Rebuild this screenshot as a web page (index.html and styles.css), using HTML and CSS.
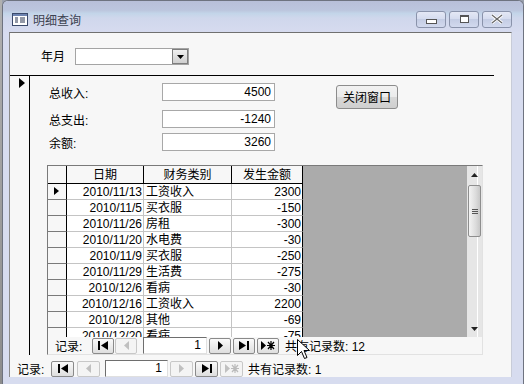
FILE: index.html
```html
<!DOCTYPE html>
<html lang="zh-CN">
<head>
    <meta charset="UTF-8">
    <title>明细查询</title>
    <link rel="stylesheet" href="styles.css">
</head>
<body>
    <div class="escritorio"></div>
    <div class="ventana">
        <div class="titulo">
            <svg class="icono" width="16" height="13" viewBox="0 0 16 13">
                <rect x="0.5" y="0.5" width="15" height="12" fill="#fff" stroke="#3b4a6b"/>
                <rect x="1" y="1" width="14" height="2" fill="#6d83b0"/>
                <path d="M3 5h3M3 7h3M3 9h3M8 5h5M8 7h5M8 9h5" stroke="#26324e" stroke-width="1"/>
            </svg>
            <span class="titulo-texto">明细查询</span>
            <div class="controles">
                <div class="control"><span class="min"></span></div>
                <div class="control"><span class="max"></span></div>
                <div class="control">
                    <svg width="14" height="10" viewBox="0 0 14 10"><path d="M2 1l10 8M12 1L2 9" stroke="#fff" stroke-width="3"/><path d="M2 1l10 8M12 1L2 9" stroke="#666" stroke-width="1.2"/></svg>
                </div>
            </div>
        </div>

        <div class="cliente">
            <div class="cabecera">
                <span class="etiqueta-mes">年月</span>
                <div class="combo">
                    <div class="combo-flecha"><svg width="7" height="4" viewBox="0 0 7 4"><path d="M0 0h7L3.5 4z" fill="#000"/></svg></div>
                </div>
            </div>

            <div class="detalle">
                <div class="selector"><span class="flecha"></span></div>
                <div class="cuerpo">
                    <div class="fila-superior">
                        <div class="campos">
                            <div class="campo c1"><span class="etiqueta">总收入:</span><span class="caja">4500</span></div>
                            <div class="campo c2"><span class="etiqueta">总支出:</span><span class="caja">-1240</span></div>
                            <div class="campo c3"><span class="etiqueta">余额:</span><span class="caja">3260</span></div>
                        </div>
                        <button class="cerrar">关闭窗口</button>
                    </div>

                    <div class="subform">
                        <div class="hoja">
                            <div class="tabla-zona">
                                <div class="tabla">
                                    <div class="fila encabezado">
                                        <div class="sel"></div>
                                        <div class="col fecha">日期</div>
                                        <div class="col tipo">财务类别</div>
                                        <div class="col monto">发生金额</div>
                                    </div>
                                    <div class="fila"><div class="sel"><span class="flecha"></span></div><div class="col fecha">2010/11/13</div><div class="col tipo">工资收入</div><div class="col monto">2300</div></div>
                                    <div class="fila"><div class="sel"></div><div class="col fecha">2010/11/5</div><div class="col tipo">买衣服</div><div class="col monto">-150</div></div>
                                    <div class="fila"><div class="sel"></div><div class="col fecha">2010/11/26</div><div class="col tipo">房租</div><div class="col monto">-300</div></div>
                                    <div class="fila"><div class="sel"></div><div class="col fecha">2010/11/20</div><div class="col tipo">水电费</div><div class="col monto">-30</div></div>
                                    <div class="fila"><div class="sel"></div><div class="col fecha">2010/11/9</div><div class="col tipo">买衣服</div><div class="col monto">-250</div></div>
                                    <div class="fila"><div class="sel"></div><div class="col fecha">2010/11/29</div><div class="col tipo">生活费</div><div class="col monto">-275</div></div>
                                    <div class="fila"><div class="sel"></div><div class="col fecha">2010/12/6</div><div class="col tipo">看病</div><div class="col monto">-30</div></div>
                                    <div class="fila"><div class="sel"></div><div class="col fecha">2010/12/16</div><div class="col tipo">工资收入</div><div class="col monto">2200</div></div>
                                    <div class="fila"><div class="sel"></div><div class="col fecha">2010/12/8</div><div class="col tipo">其他</div><div class="col monto">-69</div></div>
                                    <div class="fila"><div class="sel"></div><div class="col fecha">2010/12/20</div><div class="col tipo">看病</div><div class="col monto">-75</div></div>
                                </div>
                            </div>
                            <div class="barra">
                                <svg class="barra-arriba" width="7" height="4" viewBox="0 0 7 4"><path d="M0 4h7L3.5 0z" fill="#222"/></svg>
                                <div class="pulgar"><span></span><span></span><span></span></div>
                                <svg class="barra-abajo" width="7" height="4" viewBox="0 0 7 4"><path d="M0 0h7L3.5 4z" fill="#222"/></svg>
                            </div>
                        </div>
                        <div class="navegacion nav-sub">
                            <span class="nav-etiqueta">记录:</span>
                            <span class="boton primero"><svg width="10" height="9" viewBox="0 0 10 9"><rect width="2" height="9"/><path d="M10 0v9L3 4.5z"/></svg></span>
                            <span class="boton anterior apagado"><svg width="5" height="9" viewBox="0 0 5 9"><path d="M5 0v9L0 4.5z"/></svg></span>
                            <span class="numero">1</span>
                            <span class="boton"><svg width="5" height="9" viewBox="0 0 5 9"><path d="M0 0v9l5-4.5z"/></svg></span>
                            <span class="boton"><svg width="10" height="9" viewBox="0 0 10 9"><path d="M0 0v9l7-4.5z"/><rect x="8" width="2" height="9"/></svg></span>
                            <span class="boton"><svg width="14" height="9" viewBox="0 0 14 9"><path d="M0 0v9l5-4.5z"/><path d="M10 0v9M6 4.5h8M7 1l6 7M13 1L7 8" stroke="#000" stroke-width="1.2"/></svg></span>
                            <span class="total">共有记录数: 12</span>
                        </div>
                    </div>
                </div>
            </div>

            <div class="navegacion nav-principal">
                <span class="nav-etiqueta">记录:</span>
                <span class="boton primero"><svg width="10" height="9" viewBox="0 0 10 9"><rect width="2" height="9"/><path d="M10 0v9L3 4.5z"/></svg></span>
                <span class="boton anterior apagado"><svg width="5" height="9" viewBox="0 0 5 9"><path d="M5 0v9L0 4.5z"/></svg></span>
                <span class="numero">1</span>
                <span class="boton apagado"><svg width="5" height="9" viewBox="0 0 5 9"><path d="M0 0v9l5-4.5z"/></svg></span>
                <span class="boton"><svg width="10" height="9" viewBox="0 0 10 9"><path d="M0 0v9l7-4.5z"/><rect x="8" width="2" height="9"/></svg></span>
                <span class="boton apagado"><svg width="14" height="9" viewBox="0 0 14 9"><path d="M0 0v9l5-4.5z"/><path d="M10 0v9M6 4.5h8M7 1l6 7M13 1L7 8" stroke="#bbb" stroke-width="1.2"/></svg></span>
                <span class="total">共有记录数: 1</span>
            </div>
        </div>
    </div>

    <!-- puntero del raton -->
    <svg class="puntero" width="14" height="22" viewBox="0 0 14 22">
        <path d="M0.5 0.5v16l4-4 3 7 2.5-1-3-7h5.5z" fill="#fff" stroke="#000"/>
    </svg>
</body>
</html>
```

FILE: styles.css
```css
/* -------------------------ventana------------------------ */
body {
    margin: 0;
    width: 524px;
    height: 384px;
    overflow: hidden;
    position: relative;
    display: flex;
    background-color: #9aa0ad;
    font-family: "Liberation Sans", "Noto Sans CJK SC", sans-serif;
    font-size: 12px;
    color: #000;
}

.escritorio {
    width: 2px;
    background: linear-gradient(#b0b0b0, #8c8c8c);
}

.ventana {
    width: 522px;
    height: 384px;
    box-sizing: border-box;
    border: 1px solid #6e7380;
    border-bottom: none;
    border-radius: 6px 6px 0 0;
    background-color: #d7dcef;
    display: flex;
    flex-direction: column;
}

.titulo {
    height: 31px;
    flex: none;
    display: flex;
    align-items: center;
    border-radius: 5px 5px 0 0;
    background: linear-gradient(#b8bfd9 0%, #bcc6de 30%, #c3d5e9 40%, #cfd7ec 55%, #d6dbef 100%);
}

.icono {
    margin-left: 9px;
    margin-top: 5px;
}

.titulo-texto {
    margin-left: 5px;
    margin-top: 6px;
    color: #3c4250;
    font-size: 12px;
}

.controles {
    margin-left: auto;
    margin-right: 11px;
    margin-top: 5px;
    display: flex;
    gap: 3px;
}

.control {
    width: 28px;
    height: 15px;
    border: 1px solid #8a93ab;
    border-radius: 3px;
    background: linear-gradient(#e4e8f5 0%, #d5dcef 45%, #c4cde4 50%, #d2d9ee 100%);
    display: flex;
    align-items: center;
    justify-content: center;
}

.min {
    width: 9px;
    height: 3px;
    margin-top: 5px;
    border: 1px solid #555;
    background-color: #fff;
}

.max {
    width: 7px;
    height: 5px;
    border: 1px solid #555;
    border-top-width: 2px;
    background-color: #fff;
}

/* -------------------------area cliente------------------------ */
.cliente {
    margin-left: 6px;
    width: 503px;
    height: 345px;
    box-sizing: border-box;
    border-top: 1px solid #707070;
    border-left: 1px solid #8a8a8a;
    border-right: 1px solid #c8ccd8;
    background-color: #f7f7f7;
    display: flex;
    flex-direction: column;
}

.cabecera {
    width: 484px;
    height: 42px;
    flex: none;
    border-bottom: 1px solid #000;
    display: flex;
    align-items: flex-start;
}

.etiqueta-mes {
    margin-left: 31px;
    margin-top: 16px;
    line-height: 16px;
}

.combo {
    margin-left: 10px;
    margin-top: 15px;
    width: 114px;
    height: 17px;
    box-sizing: border-box;
    border: 1px solid #a4a4a4;
    background-color: #fff;
    display: flex;
    justify-content: flex-end;
}

.combo-flecha {
    width: 16px;
    height: 15px;
    box-sizing: border-box;
    border: 1px solid #7e7e7e;
    background: linear-gradient(#f0f0f0, #cfcfcf);
    display: flex;
    align-items: center;
    justify-content: center;
}

.detalle {
    height: 280px;
    flex: none;
    display: flex;
}

.selector {
    width: 19px;
    height: 279px;
    border-right: 1px solid #000;
    flex: none;
}

.flecha {
    display: block;
    width: 0;
    height: 0;
    border-top: 5px solid transparent;
    border-bottom: 5px solid transparent;
    border-left: 6px solid #000;
}

.selector .flecha {
    margin: 2px 0 0 9px;
}

.cuerpo {
    flex: 1;
    display: flex;
    flex-direction: column;
}

.fila-superior {
    display: flex;
    align-items: flex-start;
}

.campos {
    padding-top: 7px;
    display: flex;
    flex-direction: column;
}

.campo {
    display: flex;
    align-items: center;
}

.c2 {
    margin-top: 9px;
}

.c3 {
    margin-top: 5px;
}

.etiqueta {
    width: 113px;
    padding-left: 19px;
}

.caja {
    width: 113px;
    height: 18px;
    box-sizing: border-box;
    border: 1px solid #a8a8a8;
    background-color: #fff;
    text-align: right;
    padding-right: 3px;
    line-height: 16px;
}

.cerrar {
    margin-left: 61px;
    margin-top: 9px;
    width: 62px;
    height: 24px;
    padding: 0 0 2px 0;
    border: 1px solid #8c8c8c;
    border-radius: 3px;
    background: linear-gradient(#f2f2f2 0%, #ebebeb 48%, #d8d8d8 52%, #cfcfcf 100%);
    font-family: inherit;
    font-size: 12px;
    color: #000;
}

/* -------------------------subformulario------------------------ */
.subform {
    margin-left: 17px;
    margin-top: 14px;
    width: 436px;
    height: 190px;
    box-sizing: border-box;
    border-top: 1px solid #7a7a7a;
    border-left: 1px solid #7a7a7a;
    border-right: 1px solid #e2e2e2;
    border-bottom: 1px solid #e2e2e2;
    display: flex;
    flex-direction: column;
}

.hoja {
    height: 171px;
    display: flex;
    flex: none;
}

.tabla-zona {
    width: 420px;
    background-color: #ababab;
    overflow: hidden;
}

.tabla {
    width: 255px;
}

.fila {
    display: flex;
    height: 16px;
    line-height: 15px;
    background-color: #fff;
}

.fila .sel,
.fila .col {
    box-sizing: border-box;
    height: 16px;
    padding-top: 1px;
    border-bottom: 1px solid #c4c4c4;
    border-right: 1px solid #c4c4c4;
    white-space: nowrap;
    overflow: hidden;
}

.fila .sel {
    width: 19px;
    padding-top: 0;
    background-color: #f7f7f7;
    border-right: 1px solid #000;
    border-bottom: 1px solid #7a7a7a;
}

.fila .sel .flecha {
    margin: 3px 0 0 6px;
    border-top-width: 4px;
    border-bottom-width: 4px;
    border-left-width: 5px;
}

.fecha {
    width: 77px;
    text-align: right;
    padding-right: 1px;
}

.tipo {
    width: 88px;
    padding-left: 2px;
}

.fila .monto {
    width: 71px;
    text-align: right;
    padding-right: 1px;
    border-right: 1px solid #000;
}

.encabezado {
    height: 18px;
    line-height: 17px;
    background-color: #f7f7f7;
}

.encabezado .sel,
.encabezado .col {
    height: 18px;
    border-bottom: 1px solid #000;
    border-right: 1px solid #000;
    text-align: center;
    padding: 1px 0 0 0;
}

.barra {
    width: 15px;
    background: linear-gradient(90deg, #e6e6e6 0, #e6e6e6 10px, #fff 10px, #fff 11px, #e6e6e6 11px);
    display: flex;
    flex-direction: column;
    align-items: center;
}

.barra-arriba {
    margin-top: 7px;
}

.pulgar {
    margin-top: 8px;
    width: 13px;
    height: 52px;
    box-sizing: border-box;
    border: 1px solid #8e8e8e;
    border-radius: 2px;
    background: linear-gradient(90deg, #f3f3f3, #dcdcdc 60%, #c8c8c8);
    display: flex;
    flex-direction: column;
    justify-content: center;
    align-items: center;
    gap: 1px;
}

.pulgar span {
    width: 6px;
    height: 1px;
    background-color: #555;
}

.barra-abajo {
    margin-top: auto;
    margin-bottom: 6px;
}

/* -------------------------navegacion------------------------ */
.navegacion {
    display: flex;
    align-items: center;
    white-space: nowrap;
}

.boton {
    width: 22px;
    height: 16px;
    box-sizing: border-box;
    border: 1px solid #8a8a8a;
    border-radius: 2px;
    background: linear-gradient(#fafafa, #dedede);
    display: flex;
    align-items: center;
    justify-content: center;
    margin-left: 2px;
}

.boton svg {
    fill: #000;
}

.apagado {
    border-color: #c8c8c8;
    background: #f4f4f4;
}

.apagado svg {
    fill: #c0c0c0;
}

.numero {
    height: 17px;
    box-sizing: border-box;
    border-top: 1px solid #6e6e6e;
    border-left: 1px solid #6e6e6e;
    border-right: 1px solid #e0e0e0;
    border-bottom: 1px solid #e0e0e0;
    background-color: #fff;
    text-align: right;
    padding-right: 5px;
    line-height: 15px;
    margin-left: 6px;
    margin-right: 0;
}

.total {
    margin-left: 6px;
}

.nav-sub {
    height: 17px;
    padding-left: 7px;
    background-color: #f7f7f7;
}

.nav-sub .nav-etiqueta {
    width: 35px;
}

.nav-sub .anterior {
    margin-left: 1px;
}

.nav-sub .numero {
    width: 64px;
}

.nav-principal {
    height: 20px;
    padding-left: 7px;
    padding-top: 4px;
}

.nav-principal .nav-etiqueta {
    width: 32px;
}

.nav-principal .boton {
    width: 23px;
    margin-left: 2px;
}

.nav-principal .anterior {
    margin-left: 3px;
}

.nav-principal .numero {
    width: 63px;
    margin-left: 5px;
}

.nav-principal .total {
    margin-left: 5px;
}

.puntero {
    position: absolute;
    left: 297px;
    top: 339px;
}
```
